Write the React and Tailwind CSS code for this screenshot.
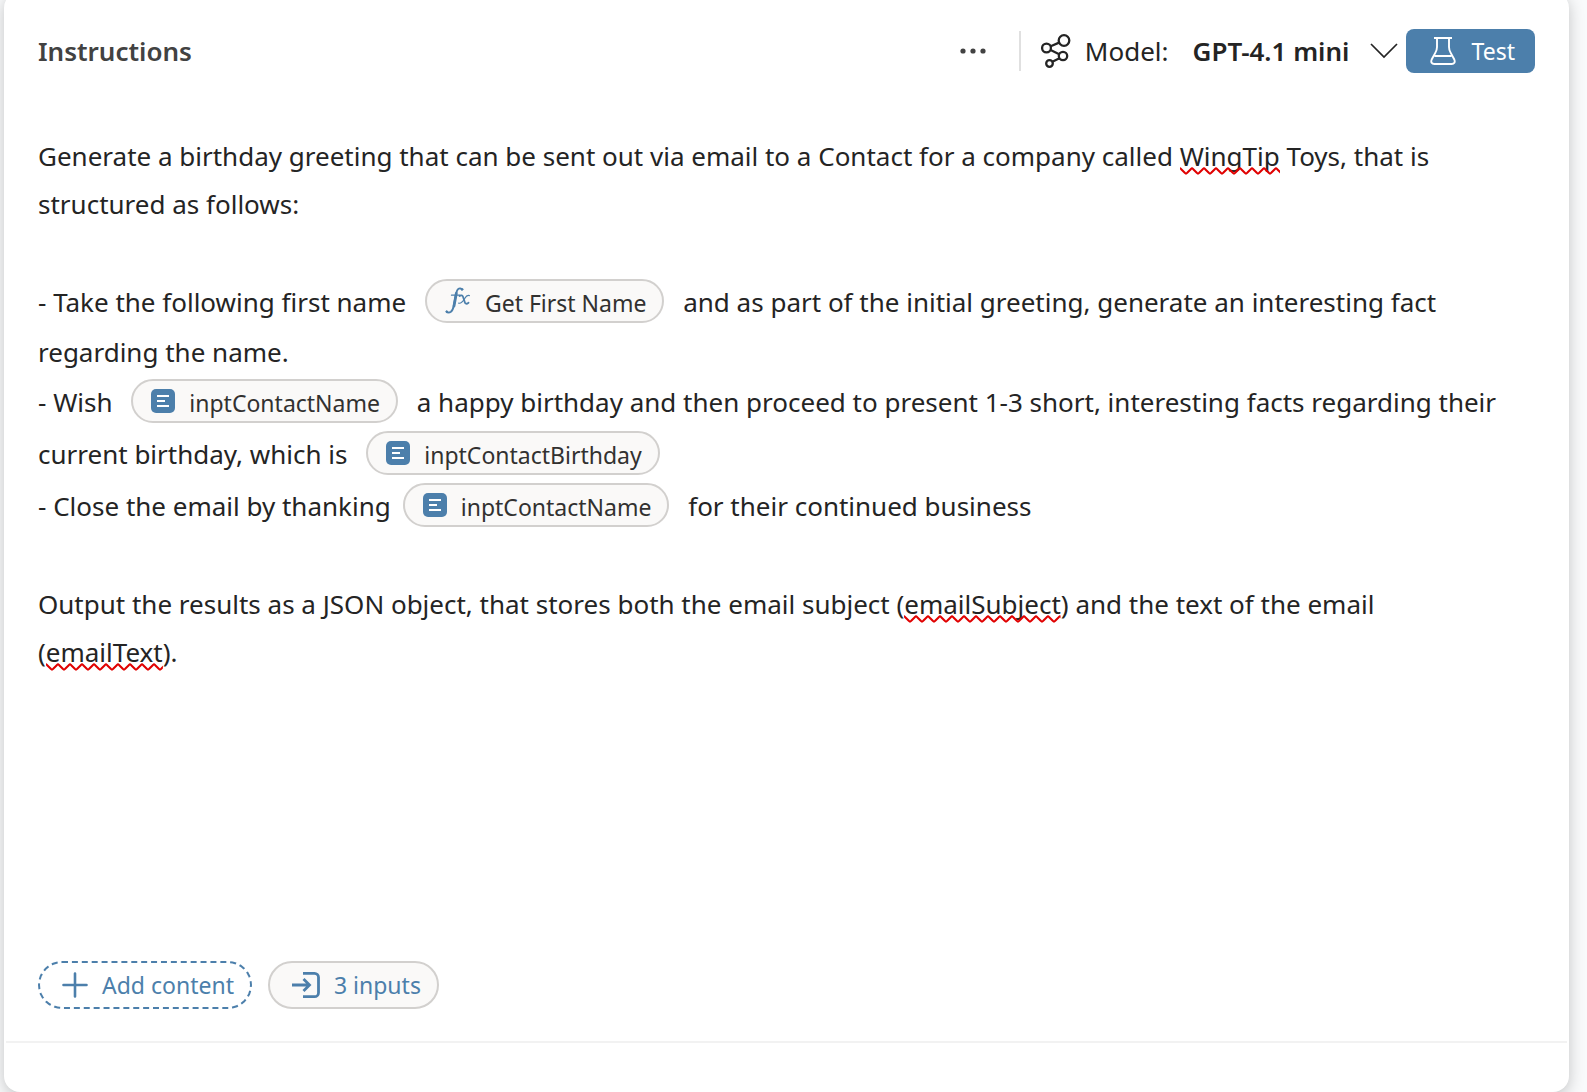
import { useId } from "react";

function TextIcon() {
  return (
    <svg viewBox="0 0 24 24" className="size-6 shrink-0" aria-hidden="true">
      <rect width="24" height="24" rx="5" fill="#4c7fab" />
      <path d="M6 7h12M6 12h8M6 17h12" stroke="#fff" strokeWidth="2" fill="none" />
    </svg>
  );
}

function FormulaIcon() {
  return (
    <svg viewBox="0 0 26 28" className="h-7 w-[26px] shrink-0" fill="none" stroke="#4c7fab" strokeLinecap="round" aria-hidden="true">
      <path d="M17 2.600c-.8-1.600-2.700-1.600-3.900-.4-1.500 1.500-1.900 4-2.500 7.100L8.900 18.200c-.7 3.500-1.500 5.400-3 6.600-1.500 1.100-3.500 1-4.200.1" strokeWidth="1.900" />
      <path d="M11.300 6.500L9 19" strokeWidth="2.800" />
      <circle cx="17" cy="2.300" r=".9" fill="#4c7fab" />
      <circle cx="1.800" cy="24.600" r=".9" fill="#4c7fab" />
      <path d="M6.500 8.200h8.500" strokeWidth="1.300" />
      <path d="M14.500 9c1.800-1.200 3-.8 3.600 1l1.700 5.200c.5 1.800 1.800 2.100 3.700.5" strokeWidth="1.800" />
      <path d="M24.400 8.600c-1.700-.7-3.200.3-4.700 2.900-1.700 2.900-3.500 5.200-6 4.700" strokeWidth="1.200" />
    </svg>
  );
}

function ModelIcon() {
  return (
    <svg viewBox="0 0 30 34" className="h-[34px] w-[30px]" fill="none" stroke="currentColor" strokeWidth="2.300" aria-hidden="true">
      <circle cx="23" cy="6.500" r="5.300" />
      <circle cx="5.500" cy="14" r="4.400" />
      <circle cx="22" cy="22" r="4.200" />
      <circle cx="8.500" cy="29.500" r="3.300" />
      <path d="M9.700 12.200l8.400-3.600M9.600 16l8.600 4.200M11.400 27.700l7-3.500" />
    </svg>
  );
}

function FlaskIcon() {
  return (
    <svg viewBox="0 0 26 30" className="h-[30px] w-[26px]" fill="none" stroke="currentColor" strokeWidth="1.900" aria-hidden="true">
      <path d="M4 2h18M7 2v9c0 2-.6 3.800-1.600 5.600L1.700 23.500C.6 26.300 1.800 28 4.300 28h17.400c2.500 0 3.700-1.700 2.600-4.500l-3.700-6.900C19.600 14.800 19 13 19 11V2M4.600 20h16.800" />
    </svg>
  );
}

function Chip({ icon, children }) {
  return (
    <span className="mx-3 mt-[3px] mb-[5px] inline-flex h-11 items-center gap-3.5 rounded-full border-2 border-[#d2d0ce] bg-[#faf9f8] pr-4 pl-[18px] text-[23px] leading-[44px] whitespace-nowrap text-[#323130]">
      {icon}
      <span className="self-baseline">{children}</span>
    </span>
  );
}

function Misspelled({ children }) {
  const id = useId();
  return (
    <span className="relative">
      {children}
      <svg className="pointer-events-none absolute inset-x-0 -bottom-px h-2 w-full" aria-hidden="true">
        <pattern id={id} width="12" height="8" patternUnits="userSpaceOnUse">
          <path d="M-2 3L-1 2Q0 .6 1 2L5 6Q6 7.400 7 6L11 2Q12 .6 13 2L14 3" fill="none" stroke="#e00000" strokeWidth="2" />
        </pattern>
        <rect width="100%" height="8" fill={`url(#${id})`} />
      </svg>
    </span>
  );
}

export default function App() {
  return (
    <div className="flex min-h-screen overflow-hidden bg-[#f9fafb] pr-[18px] pl-1 font-['Noto_Sans','Segoe_UI',sans-serif] text-[#242424]">
      <main className="-mt-2 flex flex-1 flex-col rounded-2xl bg-white pt-9 shadow-[0_4px_16px_rgba(0,0,0,0.22)]">
        <header className="flex h-[46px] items-center px-[34px]">
          <h1 className="text-[26px] font-semibold text-[#424242]">Instructions</h1>
          <button type="button" aria-label="More options" className="ml-auto text-[#424242]">
            <svg viewBox="0 0 28 6" className="h-1.5 w-7" fill="currentColor" aria-hidden="true">
              <circle cx="4" cy="3" r="2.600" />
              <circle cx="14" cy="3" r="2.600" />
              <circle cx="24" cy="3" r="2.600" />
            </svg>
          </button>
          <div className="mr-5 ml-8 h-10 w-0.5 bg-[#e0e0e0]" />
          <ModelIcon />
          <label htmlFor="model" className="ml-3.5 text-[26px]">Model:</label>
          <select id="model" className="ml-6 appearance-none bg-transparent text-[26px] font-semibold">
            <option>GPT-4.1 mini</option>
          </select>
          <svg viewBox="0 0 28 16" className="pointer-events-none ml-5 h-4 w-7" fill="none" stroke="currentColor" strokeWidth="1.700" aria-hidden="true">
            <path d="M1 1l13 13L27 1" />
          </svg>
          <button type="button" className="ml-2 flex h-11 items-center gap-4 rounded-lg bg-[#4c7fab] pr-5 pl-6 text-[23px] text-white">
            <FlaskIcon />
            Test
          </button>
        </header>

        <section role="textbox" aria-multiline="true" aria-label="Instructions" className="flex-1 px-[34px] pt-[58px] text-[26px] leading-[48px]">
          <p>
            Generate a birthday greeting that can be sent out via email to a Contact for a company called{" "}
            <Misspelled>WingTip</Misspelled> Toys, that is
            <br />
            structured as follows:
          </p>
          <p className="mt-12">
            - Take the following first name <Chip icon={<FormulaIcon />}>Get First Name</Chip> and as part of the initial greeting, generate an interesting fact
            <br />
            regarding the name.
          </p>
          <p>
            - Wish <Chip icon={<TextIcon />}>inptContactName</Chip> a happy birthday and then proceed to present 1-3 short, interesting facts regarding their
            <br />
            current birthday, which is <Chip icon={<TextIcon />}>inptContactBirthday</Chip>
          </p>
          <p>
            - Close the email by thanking<Chip icon={<TextIcon />}>inptContactName</Chip> for their continued business
          </p>
          <p className="mt-12">
            Output the results as a JSON object, that stores both the email subject (<Misspelled>emailSubject</Misspelled>) and the text of the email
            <br />
            (<Misspelled>emailText</Misspelled>).
          </p>
        </section>

        <div className="flex gap-4 px-[34px] pb-8 text-[23px] text-[#4c7fab]">
          <button type="button" className="flex h-12 items-center gap-3.5 rounded-full border-2 border-dashed border-[#4c7fab] pr-4 pl-[22px]">
            <svg viewBox="0 0 26 26" className="size-[26px]" fill="none" stroke="currentColor" strokeWidth="2.600" strokeLinecap="round" aria-hidden="true">
              <path d="M13 1.500v23M1.500 13h23" />
            </svg>
            Add content
          </button>
          <button type="button" className="flex h-12 items-center gap-3.5 rounded-full border-2 border-[#d2d0ce] bg-[#faf9f8] pr-4 pl-[22px]">
            <svg viewBox="0 0 28 28" className="size-7" fill="none" stroke="currentColor" strokeWidth="2.800" aria-hidden="true">
              <path d="M11 2.300h11.500a4 4 0 0 1 4 4v15.400a4 4 0 0 1-4 4H11M0 14h17M11.500 8l6 6-6 6" />
            </svg>
            3 inputs
          </button>
        </div>
        <footer className="mx-0.5 h-[51px] border-t-2 border-[#f2f2f2]" />
      </main>
    </div>
  );
}
